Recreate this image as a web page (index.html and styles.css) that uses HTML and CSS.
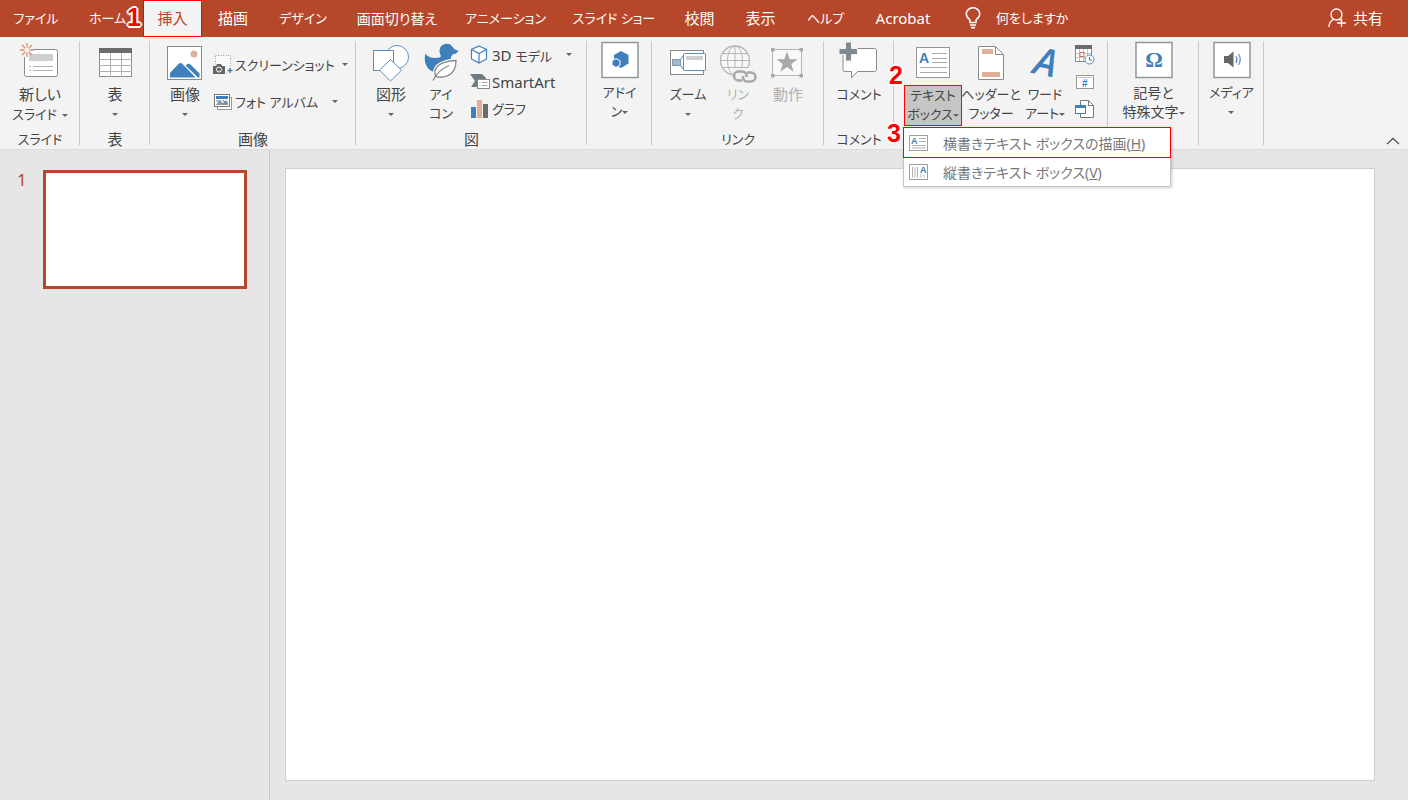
FILE: index.html
```html
<!DOCTYPE html>
<html lang="ja">
<head>
    <meta charset="UTF-8">
    <meta name="viewport" content="width=device-width, initial-scale=1.0">
    <title>PowerPoint</title>
    <link rel="stylesheet" href="styles.css">
</head>
<body>

    <header class="titlebar">
        <nav class="tabs">
            <a href="#" class="tab kana">ファイル</a>
            <a href="#" class="tab kana">ホーム<span class="badge badge-1">1</span></a>
            <a href="#" class="tab active">挿入</a>
            <a href="#" class="tab">描画</a>
            <a href="#" class="tab kana">デザイン</a>
            <a href="#" class="tab mixed">画面切り替え</a>
            <a href="#" class="tab kana">アニメーション</a>
            <a href="#" class="tab kana">スライド ショー</a>
            <a href="#" class="tab">校閲</a>
            <a href="#" class="tab">表示</a>
            <a href="#" class="tab kana">ヘルプ</a>
            <a href="#" class="tab">Acrobat</a>
        </nav>
        <button class="tell-me kana">
            <svg width="16" height="22" viewBox="0 0 16 22" fill="none" stroke="#fff" stroke-width="1.6">
                <path d="M5 15.5V13.5C5 12 1.2 10.5 1.2 7A6.8 6.3 0 0 1 14.8 7C14.8 10.5 11 12 11 13.5V15.5Z"/>
                <path d="M5 18H11M6 20.6H10"/>
            </svg>
            何をしますか
        </button>
        <button class="share">
            <svg width="18" height="20" viewBox="0 0 18 20" fill="none" stroke="#fff" stroke-width="1.3">
                <circle cx="8.5" cy="6.5" r="5.5"/>
                <path d="M.8 19C1.2 15 3 12.6 5.8 11.2M11 11.4L12.5 12.5M13.5 10.5V19M9 15H18"/>
            </svg>
            共有
        </button>
    </header>

    <section class="ribbon">
        <!-- スライド -->
        <div class="group g-slide">
            <div class="items">
                <button class="big">
                    <svg width="40" height="44" viewBox="0 0 40 44">
                        <rect x="4.5" y="8.5" width="33" height="27" rx="2" fill="#fff" stroke="#8a8a8a"/>
                        <rect x="9" y="13" width="24" height="7" fill="#cfcfcf"/>
                        <path d="M9 25.5H11M13 25.5H33M9 29.5H11M13 29.5H33" stroke="#b5b5b5"/>
                        <path d="M0 0H14V7L10 12L7 16H0Z" fill="#f3f3f3"/>
                        <path d="M7 2V6.5M7 11.5V16M0 9H4.5M9.5 9H14M2 4L5.3 7.3M8.7 10.7L12 14M12 4L8.7 7.3M5.3 10.7L2 14" stroke="#dd8e6c" stroke-width="1.3"/>
                    </svg>
                    <span>新しい<br><span class="kana">スライド<i class="caret"></i></span></span>
                </button>
            </div>
            <div class="group-label kana">スライド</div>
        </div>

        <!-- 表 -->
        <div class="group g-table">
            <div class="items">
                <button class="big">
                    <svg width="40" height="44" viewBox="0 0 40 44">
                        <rect x="4.5" y="7.5" width="32" height="28" fill="#fff" stroke="#8a8a8a"/>
                        <rect x="4" y="7" width="33" height="5" fill="#6b6b6b"/>
                        <path d="M15.5 12V36M26.5 12V36M4 18.5H37M4 24.5H37M4 30.5H37" stroke="#b0b0b0"/>
                    </svg>
                    <span>表<br><i class="caret"></i></span>
                </button>
            </div>
            <div class="group-label">表</div>
        </div>

        <!-- 画像 -->
        <div class="group g-image">
            <div class="items">
                <button class="big">
                    <svg width="40" height="44" viewBox="0 0 40 44">
                        <rect x="2.5" y="5.5" width="34" height="33" fill="#fff" stroke="#8a8a8a"/>
                        <circle cx="29" cy="13" r="3.5" fill="#deb09a"/>
                        <path d="M5 36.5V32L13.5 23Q15.5 21 17.5 23L30.5 36.5Z" fill="#3f7fbb"/>
                        <path d="M20.500 24.5Q23.5 21.5 26 24L34.5 32.5V36.5H33Z" fill="#3f7fbb"/>
                    </svg>
                    <span>画像<br><i class="caret"></i></span>
                </button>
                <div class="stack two">
                    <button class="small kana">
                        <svg width="20" height="20" viewBox="0 0 20 20">
                            <rect x="2.5" y=".5" width="15" height="17" fill="#fafafa" stroke="#999" stroke-dasharray="1 1.5"/>
                            <path d="M0 11H3L4 9H8L9 11H12V19H0Z" fill="#666"/>
                            <circle cx="6" cy="14.5" r="2.5" fill="#666" stroke="#fff"/>
                            <path d="M14 12H20V19H14Z" fill="#f3f3f3"/>
                            <path d="M17 13V18M14.5 15.5H19.5" stroke="#3f7fbb" stroke-width="1.5"/>
                        </svg>
                        スクリーンショット<i class="caret"></i>
                    </button>
                    <button class="small kana">
                        <svg width="20" height="20" viewBox="0 0 20 20">
                            <rect x="4.5" y="5.5" width="14" height="12" fill="#fff" stroke="#999"/>
                            <rect x="1.5" y="2.5" width="15" height="12" fill="#fff" stroke="#777"/>
                            <rect x="3" y="4" width="12" height="3" fill="#3f7fbb"/>
                            <path d="M3 12.5L7 8.5L10 11L13 8L15 10V13H3Z" fill="#8a9aa5"/>
                            <path d="M3 9H8M10 8L13 12" stroke="#3f7fbb"/>
                        </svg>
                        フォト アルバム<i class="caret caret-far"></i>
                    </button>
                </div>
            </div>
            <div class="group-label">画像</div>
        </div>

        <!-- 図 -->
        <div class="group g-figure">
            <div class="items">
                <button class="big">
                    <svg width="40" height="44" viewBox="0 0 40 44" fill="#fff" stroke="#5b8fc4">
                        <circle cx="26" cy="16" r="11.5"/>
                        <rect x="2.5" y="9.5" width="20" height="20"/>
                        <path d="M19.5 18.5L30.5 29.2L19.5 40L8.5 29.2Z"/>
                    </svg>
                    <span>図形<br><i class="caret"></i></span>
                </button>
                <button class="big kana">
                    <svg width="40" height="44" viewBox="0 0 40 44">
                        <path d="M4.5 12.5C7 17 13 17.5 19 16.5C21 15.5 18.5 13 18.5 10A7.2 7.2 0 0 1 32 6.5Q34 9.5 37.5 9.5Q36 13 31.5 13.5Q29.5 16 30 18C29 24 25 31 14 31C6 30 2 21 4.5 12.5Z" fill="#3f7fbb"/>
                        <path d="M15 36C10 27 18 20 36 18.5C35 31 29 39 15 36Z" fill="#fff" stroke="#f3f3f3" stroke-width="3"/>
                        <path d="M15 35.500C11 27 18 20.5 35 19.5C35 31 28 38 15 35.5Z" fill="#fff" stroke="#8a8a8a" stroke-width="1.3"/>
                        <path d="M12 39.5C15 33 20 28 28 24.5" fill="none" stroke="#8a8a8a" stroke-width="1.3"/>
                    </svg>
                    <span>アイ<br>コン</span>
                </button>
                <div class="stack">
                    <button class="small">
                        <svg width="20" height="20" viewBox="0 0 20 20" fill="#fff" stroke="#3f7fbb" stroke-width="1.2">
                            <path d="M9 1L16.5 4.5V14L9 18L1.5 14V4.5Z"/>
                            <path d="M1.500 4.5L9 8.5L16.5 4.5M9 8.5V18" fill="none"/>
                        </svg>
                        <span>3D <span class="kana">モデル</span></span><i class="caret caret-far"></i>
                    </button>
                    <button class="small">
                        <svg width="20" height="20" viewBox="0 0 20 20">
                            <path d="M0 2H12L16 6V8H8V15H1L5 9Z" fill="#6f7b80"/>
                            <rect x="7.5" y="7.5" width="12" height="9" fill="#fff" stroke="#8a8a8a"/>
                            <path d="M9.5 10.5H10.5M12 10.5H17.5M9.5 13.5H10.5M12 13.5H17.5" stroke="#9aa"/>
                        </svg>
                        SmartArt
                    </button>
                    <button class="small kana">
                        <svg width="20" height="20" viewBox="0 0 20 20">
                            <rect x="1" y="8" width="5" height="11" fill="#3f7fbb"/>
                            <rect x="7" y="1" width="5" height="18" fill="#deb09a"/>
                            <rect x="13" y="5" width="5" height="14" fill="#6b6b6b"/>
                        </svg>
                        グラフ
                    </button>
                </div>
            </div>
            <div class="group-label">図</div>
        </div>

        <!-- アドイン -->
        <div class="group g-addin">
            <div class="items">
                <button class="big kana">
                    <svg width="40" height="42" viewBox="0 0 40 42">
                        <rect x="2" y="1.5" width="36" height="35" fill="#fff" stroke="#8f9999" stroke-width="1.5"/>
                        <path d="M21 10L28.5 14V22.5L21 27L14 22.5V14Z" fill="#3f7fbb"/>
                        <path d="M16 17.5L20 19.7V24L16 26.5L12 24V19.7Z" fill="#3f7fbb" stroke="#fff"/>
                    </svg>
                    <span>アドイ<br>ン<i class="caret"></i></span>
                </button>
            </div>
        </div>

        <!-- リンク -->
        <div class="group g-link">
            <div class="items">
                <button class="big kana">
                    <svg width="40" height="44" viewBox="0 0 40 44">
                        <rect x="2.5" y="9.5" width="33" height="24" fill="#fff" stroke="#8a8a8a"/>
                        <rect x="4.5" y="18.5" width="8" height="6" fill="#9dbbd6" stroke="#8a9aa5"/>
                        <path d="M12.5 18.5L16 13.5M12.5 24.5L16 29.5" stroke="#5b8fc4"/>
                        <rect x="15.5" y="12.5" width="22" height="17" rx="1" fill="#fff" stroke="#5b8fc4"/>
                        <rect x="18" y="15" width="17" height="4" fill="#cfcfcf"/>
                    </svg>
                    <span>ズーム<br><i class="caret"></i></span>
                </button>
                <button class="big kana" disabled>
                    <svg width="40" height="44" viewBox="0 0 40 44" fill="none" stroke="#b5b5b5">
                        <circle cx="17" cy="19.5" r="14.5" fill="#f8f8f8" stroke-width="1.3"/>
                        <ellipse cx="17" cy="19.5" rx="7.5" ry="14.5"/>
                        <path d="M17 5V34M2.5 19.5H31.5M5 12.5H29M5 26.5H29"/>
                        <path d="M14 31Q14 27 19 27H37V42H17Z" fill="#f3f3f3" stroke="none"/>
                        <g stroke="#a8a8a8" stroke-width="2.6">
                            <path d="M24 39.5H20.5A4.5 4.5 0 0 1 20.5 30.5H24.5A4.5 4.5 0 0 1 28.5 36"/>
                            <path d="M29 31.5H33A4.5 4.5 0 0 1 33 40.5H29A4.5 4.5 0 0 1 25 35"/>
                        </g>
                    </svg>
                    <span>リン<br>ク</span>
                </button>
                <button class="big" disabled>
                    <svg width="40" height="44" viewBox="0 0 40 44">
                        <rect x="4.5" y="8.5" width="29" height="26" fill="#f8f8f8" stroke="#b5b5b5"/>
                        <path d="M3 7H6.5V10.5H3ZM31.5 7H35V10.5H31.5ZM3 33H6.5V36.5H3ZM31.5 33H35V36.5H31.5Z" fill="#a8a8a8"/>
                        <path d="M19 10.5L21.7 18.2H29.5L23.3 23L25.5 30.7L19 26L12.5 30.7L14.7 23L8.5 18.2H16.3Z" fill="#a8a8a8"/>
                    </svg>
                    <span>動作</span>
                </button>
            </div>
            <div class="group-label kana">リンク</div>
        </div>

        <!-- コメント -->
        <div class="group g-comment">
            <div class="items">
                <button class="big kana">
                    <svg width="40" height="44" viewBox="0 0 40 44">
                        <path d="M6 7.5H35.5Q37.5 7.5 37.5 9.5V28.5Q37.5 30.5 35.5 30.5H18.5L12.5 37V30.5H6Q4 30.5 4 28.5V9.5Q4 7.5 6 7.5Z" fill="#fff" stroke="#8a8a8a"/>
                        <path d="M6.5 1H12.5V7.5H18.5V13.5H12.5V20H6.5V13.5H0V7.5H6.5Z" fill="#7f8a8e" stroke="#f3f3f3"/>
                    </svg>
                    <span>コメント</span>
                </button>
            </div>
            <div class="group-label kana">コメント</div>
        </div>

        <!-- テキスト -->
        <div class="group g-text">
            <div class="items">
                <button class="big kana textbox" aria-haspopup="menu" aria-expanded="true">
                    <svg width="40" height="44" viewBox="0 0 40 44">
                        <rect x="3.5" y="6.5" width="33" height="30" fill="#fff" stroke="#8f9999"/>
                        <text x="6" y="22" class="letter" font-size="14">A</text>
                        <path d="M19 12.5H34M19 17.5H34M19 21.5H34M7 26.5H34M7 31.5H34" stroke="#a9a9a9"/>
                    </svg>
                    <span class="pressed">テキスト<br>ボックス<i class="caret"></i></span>
                </button>
                <button class="big kana header-footer">
                    <svg width="40" height="44" viewBox="0 0 40 44">
                        <path d="M7.5 5.5H24.5L32.5 13.5V38.5H7.5Z" fill="#fff" stroke="#8a8a8a"/>
                        <path d="M24.5 5.5V13.5H32.5" fill="none" stroke="#8a8a8a"/>
                        <path d="M11 8H22V13H11ZM11 31H29V36H11Z" fill="#deb09a"/>
                    </svg>
                    <span>ヘッダーと<br>フッター</span>
                </button>
                <button class="big kana">
                    <svg width="40" height="44" viewBox="0 0 40 44">
                        <text x="7" y="32" class="slanted" font-size="38" transform="rotate(12 7 32)">A</text>
                    </svg>
                    <span>ワード<br>アート<i class="caret"></i></span>
                </button>
                <div class="stack icons-only">
                    <button class="small" aria-label="日付と時刻">
                        <svg width="20" height="20" viewBox="0 0 20 20">
                            <rect x=".5" y="2.5" width="16" height="14" fill="#fff" stroke="#8a8a8a"/>
                            <rect x="0" y="0" width="17" height="4" fill="#6b6b6b"/>
                            <path d="M4.5 4V16M8.5 4V16M12.5 4V16M1 8.5H16M1 12.5H16" stroke="#c5c5c5"/>
                            <rect x="5" y="7.5" width="4" height="4" fill="#fff" stroke="#d9694a"/>
                            <circle cx="14.5" cy="14.5" r="4.5" fill="#fff" stroke="#5b8fc4"/>
                            <path d="M14.5 12V15H17" fill="none" stroke="#666"/>
                        </svg>
                    </button>
                    <button class="small" aria-label="スライド番号の挿入">
                        <svg width="20" height="20" viewBox="0 0 20 20">
                            <rect x="1.5" y="3.5" width="17" height="13" fill="#fff" stroke="#999"/>
                            <path d="M3 5.5H17" stroke="#c5c5c5"/>
                            <text x="7" y="15" class="letter" font-size="10">#</text>
                        </svg>
                    </button>
                    <button class="small" aria-label="オブジェクト">
                        <svg width="20" height="20" viewBox="0 0 20 20">
                            <path d="M5.5 1.5H13.5L18.5 6.5V18.5H5.5Z" fill="#fff" stroke="#777"/>
                            <path d="M13.5 1.5V6.5H18.5" fill="none" stroke="#777"/>
                            <rect x=".5" y="6.5" width="10" height="8" fill="#fff" stroke="#3f7fbb"/>
                            <rect x="0" y="6" width="11" height="3" fill="#3f7fbb"/>
                        </svg>
                    </button>
                </div>
            </div>

            <div class="menu" role="menu">
                <button class="menu-item highlighted" role="menuitem">
                    <svg width="20" height="16" viewBox="0 0 20 16">
                        <rect x=".5" y=".5" width="18" height="15" fill="#fff" stroke="#9aa2a2"/>
                        <text x="2" y="9" class="letter" font-size="9">A</text>
                        <path d="M10 3.5H17M10 6.5H17M3 10.5H17M3 13H17" stroke="#b0b0b0"/>
                    </svg>
                    <span>横書きテキスト ボックスの描画(<u>H</u>)</span>
                </button>
                <button class="menu-item" role="menuitem">
                    <svg width="20" height="16" viewBox="0 0 20 16">
                        <rect x=".5" y=".5" width="18" height="15" fill="#fff" stroke="#9aa2a2"/>
                        <text x="11" y="9" class="letter" font-size="9">A</text>
                        <path d="M3.5 3V13.5M6 3V13.5M8.5 3V13.5M12 10.5V13.5M15 10.5V13.5" stroke="#b0b0b0"/>
                    </svg>
                    <span>縦書きテキスト ボックス(<u>V</u>)</span>
                </button>
            </div>
            <span class="badge badge-2">2</span>
            <span class="badge badge-3">3</span>
        </div>

        <!-- 記号と特殊文字 -->
        <div class="group g-symbol">
            <div class="items">
                <button class="big mixed">
                    <svg width="40" height="42" viewBox="0 0 40 42">
                        <rect x="2" y="1.5" width="36" height="35" fill="#fff" stroke="#8f9999" stroke-width="1.5"/>
                        <text x="20" y="26" class="omega" font-size="22">Ω</text>
                    </svg>
                    <span>記号と<br>特殊文字<i class="caret"></i></span>
                </button>
            </div>
        </div>

        <!-- メディア -->
        <div class="group g-media">
            <div class="items">
                <button class="big kana">
                    <svg width="40" height="42" viewBox="0 0 40 42">
                        <rect x="2" y="1.5" width="36" height="35" fill="#fff" stroke="#8f9999" stroke-width="1.5"/>
                        <path d="M12 15H16L21.5 10.5V26.5L16 22H12Z" fill="#666"/>
                        <path d="M24 15Q26 18.5 24 22M26.5 13Q30 18.5 26.5 24" fill="none" stroke="#5b8fc4" stroke-width="1.2"/>
                    </svg>
                    <span>メディア<br><i class="caret"></i></span>
                </button>
            </div>
        </div>

        <button class="collapse" aria-label="リボンを折りたたむ">
            <svg width="14" height="8" viewBox="0 0 14 8" fill="none" stroke="#555" stroke-width="1.3"><path d="M1 7L7 1.5L13 7"/></svg>
        </button>
    </section>

    <main class="workspace">
        <aside class="thumbnails">
            <span class="slide-number">1</span>
            <button class="thumbnail" aria-label="スライド 1"></button>
        </aside>
        <div class="editor">
            <div class="slide"></div>
        </div>
    </main>

</body>
</html>
```
FILE: styles.css
```css
* {
    box-sizing: border-box;
}
body {
    margin: 0;
    min-height: 100vh;
    display: flex;
    flex-direction: column;
    background-color: #e6e6e6;
    color: #444;
    font-family: "Noto Sans", "Noto Sans CJK JP", sans-serif;
    font-size: 15px;
    font-feature-settings: "palt";
}
button {
    border: 0;
    padding: 0;
    background: none;
    color: inherit;
    font: inherit;
    font-feature-settings: inherit;
    white-space: nowrap;
}
svg {
    display: block;
    flex: none;
}
/* Kana labels are set smaller than kanji ones */
.kana {
    font-size: 13px;
}
.mixed {
    font-size: 14px;
}

/* Title bar */
.titlebar {
    display: flex;
    height: 37px;
    background-color: #b7472a;
    color: #fff;
}
.tabs {
    display: grid;
    grid-template-columns: 72px 71px 59px 62px 78px 110px 107px 110px 61px 61px 69px 86px;
}
.tab {
    position: relative;
    display: flex;
    align-items: center;
    justify-content: center;
    padding-bottom: 2px;
    color: #fff;
    text-decoration: none;
    white-space: nowrap;
}
.tab.active {
    background-color: #f3f3f3;
    color: #b7472a;
    border: 1px solid #f00;
}
.tell-me, .share {
    display: flex;
    align-items: center;
    padding-bottom: 2px;
}
.tell-me {
    gap: 15px;
    margin-left: 19px;
}
.share {
    gap: 7px;
    margin-left: auto;
    padding-right: 25px;
}

/* Numbered step markers */
.badge {
    position: absolute;
    z-index: 2;
    color: #f00;
    font: bold 25px/25px "Liberation Sans", sans-serif;
    text-shadow: -2px 0 #fff, 2px 0 #fff, 0 -2px #fff, 0 2px #fff, -1px -1px #fff, 1px -1px #fff, -1px 1px #fff, 1px 1px #fff;
}
.badge-1 {
    right: 2px;
    top: 5px;
}
.badge-2 {
    left: -5px;
    top: 22px;
}
.badge-3 {
    left: -7px;
    top: 80px;
}

/* Ribbon */
.ribbon {
    display: flex;
    height: 113px;
    padding-top: 4px;
    background-color: #f3f3f3;
    border-bottom: 1px solid #dcdcdc;
}
.group {
    position: relative;
    display: flex;
    flex-direction: column;
    flex: none;
    background: linear-gradient(#c8c8c8, #c8c8c8) right top / 1px 104px no-repeat;
}
.g-slide { width: 80px; }
.g-table, .g-comment { width: 70px; }
.g-image { width: 206px; }
.g-figure { width: 231px; }
.g-addin, .g-media { width: 65px; }
.g-link { width: 172px; }
.g-text { width: 214px; }
.g-symbol { width: 91px; }
.items {
    display: flex;
    justify-content: center;
    height: 89px;
}
.g-image .items, .g-figure .items, .g-text .items {
    justify-content: flex-start;
    padding-left: 10px;
}
.group-label {
    text-align: center;
    line-height: 19px;
}
.big {
    display: flex;
    flex-direction: column;
    align-items: center;
    min-width: 50px;
    line-height: 19px;
}
.big:disabled {
    color: #b1b1b1;
}
.textbox, .header-footer {
    width: 58px;
}
.pressed {
    width: 58px;
    height: 41px;
    background-color: #c5c5c5;
    border: 1px solid #f00;
}
.caret {
    display: inline-block;
    margin-left: 5px;
    border: 3px solid transparent;
    border-top-color: #666;
    border-bottom: 0;
    vertical-align: middle;
}
br + .caret {
    margin-left: 0;
}
.stack {
    display: grid;
    grid-template-rows: repeat(3, 27px);
    padding-left: 4px;
}
.stack.two {
    grid-template-rows: repeat(2, 37px);
    padding-top: 5px;
    padding-left: 3px;
}
.stack.icons-only {
    padding-left: 5px;
}
.small {
    display: flex;
    align-items: center;
    gap: 2px;
}
.small .caret-far {
    margin-left: 12px;
}
.letter {
    font-family: "Liberation Sans", sans-serif;
    font-weight: bold;
    fill: #3f7fbb;
}
.slanted {
    font-family: "Open Sans", sans-serif;
    font-style: italic;
    font-weight: 600;
    fill: #3f7fbb;
}
.omega {
    font-family: "Liberation Serif", serif;
    font-weight: bold;
    fill: #3f7fbb;
    text-anchor: middle;
}
.collapse {
    align-self: flex-end;
    margin-left: auto;
    padding: 0 8px 4px;
}

/* Text box drop-down */
.menu {
    position: absolute;
    left: 9px;
    top: 86px;
    z-index: 1;
    width: 268px;
    background-color: #fff;
    border: 1px solid #c6c6c6;
    box-shadow: 1px 1px 3px rgba(0, 0, 0, 0.2);
}
.menu-item {
    display: flex;
    align-items: center;
    gap: 14px;
    width: 100%;
    height: 29px;
    padding-left: 5px;
    color: #777;
    font-size: 14px;
}
.menu-item.highlighted {
    outline: 1px solid #f00;
}

/* Slides */
.workspace {
    display: flex;
    flex: 1;
}
.thumbnails {
    display: flex;
    align-items: flex-start;
    gap: 16px;
    width: 270px;
    padding: 20px 22px 0 17px;
    border-right: 1px solid #c8c8c8;
}
.slide-number {
    color: #b7472a;
    font-size: 17px;
    line-height: 20px;
}
.thumbnail {
    flex: 1;
    aspect-ratio: 12 / 7;
    background-color: #fff;
    border: 3px solid #b7472a;
}
.editor {
    flex: 1;
    padding: 18px 33px 18px 15px;
}
.slide {
    aspect-ratio: 16 / 9;
    background-color: #fff;
    border: 1px solid #cfcfcf;
}
```
